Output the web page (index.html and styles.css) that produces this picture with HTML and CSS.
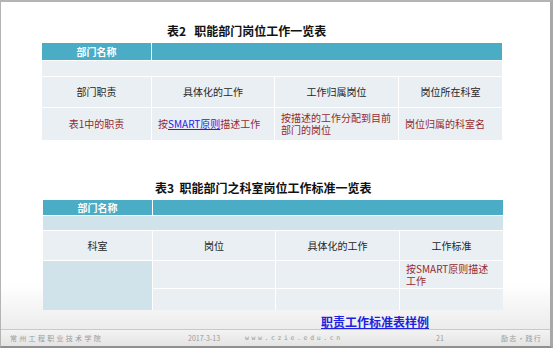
FILE: index.html
```html
<!DOCTYPE html>
<html lang="zh-CN">
<head>
<meta charset="utf-8">
<title>职能部门岗位工作一览表</title>
<link rel="stylesheet" href="styles.css">
</head>
<body>
<div class="frame">
  <div class="slide">
    <div class="title t1">表2&nbsp;&nbsp; 职能部门岗位工作一览表</div>
    <div class="tbl tbl1">
      <div class="cell head">部门名称</div>
      <div class="cell head span3"></div>
      <div class="cell light span4 r2"></div>
      <div class="cell light center">部门职责</div>
      <div class="cell light center">具体化的工作</div>
      <div class="cell light center">工作归属岗位</div>
      <div class="cell light center">岗位所在科室</div>
      <div class="cell light center red">表1中的职责</div>
      <div class="cell light red">按<a class="inlink" href="#">SMART原则</a>描述工作</div>
      <div class="cell light red">按描述的工作分配到目前部门的岗位</div>
      <div class="cell light red">岗位归属的科室名</div>
    </div>
    <div class="title t2">表3&nbsp; 职能部门之科室岗位工作标准一览表</div>
    <div class="tbl tbl2">
      <div class="cell head">部门名称</div>
      <div class="cell head span3"></div>
      <div class="cell dark span4"></div>
      <div class="cell light center">科室</div>
      <div class="cell light center">岗位</div>
      <div class="cell light center">具体化的工作</div>
      <div class="cell light center">工作标准</div>
      <div class="cell dark rowspan2"></div>
      <div class="cell light"></div>
      <div class="cell light"></div>
      <div class="cell light red narrow">按SMART原则描述工作</div>
      <div class="cell light"></div>
      <div class="cell light"></div>
      <div class="cell light"></div>
    </div>
    <a class="link" href="#">职责工作标准表样例</a>
  </div>
  <div class="footer">
    <span class="school">常州工程职业技术学院</span>
    <span class="date">2017-3-13</span>
    <span class="url">www.czie.edu.cn</span>
    <span class="page">21</span>
    <span class="motto">励志·践行</span>
  </div>
</div>
</body>
</html>
```
FILE: styles.css
```css
* { box-sizing: border-box; }
html, body { margin: 0; padding: 0; background: #fff; }
body {
  width: 553px;
  height: 348px;
  font-family: "Noto Sans CJK SC", "Noto Sans", sans-serif;
  overflow: hidden;
}
.frame {
  width: 553px;
  height: 348px;
  border-top: 2px solid #b4b4b4;
  border-left: 1px solid #b4b4b4;
  border-right: 3px solid #a8a8a8;
  border-bottom: 2px solid #8f8f8f;
  display: flex;
  flex-direction: column;
}
.slide {
  flex: 1;
  display: flex;
  flex-direction: column;
  align-items: flex-start;
  background: linear-gradient(to bottom, #fff 0, #fff 282px, #ececec 100%);
}
.title {
  font-size: 12px;
  font-weight: 700;
  line-height: 16px;
  color: #111;
  white-space: pre;
}
.t1 { margin-top: 21px; padding-left: 166px; }
.t2 { margin-top: 40px; padding-left: 154px; }
.tbl {
  display: grid;
  grid-template-columns: 109px 122px 123px 103px;
  gap: 1px;
  background: #fff;
  margin-top: 4px;
}
.tbl1 { margin-left: 41px; grid-template-rows: 17px 15px 30px 32px; }
.tbl2 { margin-left: 42px; grid-template-rows: 15px 14px 29px 27px 21px; }
.cell {
  display: flex;
  align-items: center;
  padding: 0 6px;
  font-size: 10px;
  line-height: 12px;
  color: #262626;
}
.head {
  background: #4bacc6;
  color: #fff;
  font-weight: 700;
  justify-content: center;
}
.light { background: #e9eff3; }
.dark { background: #d0e2ea; }
.center { justify-content: center; }
.span3 { grid-column: span 3; }
.span4 { grid-column: span 4; }
.rowspan2 { grid-row: span 2; }
.red { color: #962a2e; }
.narrow { padding-right: 10px; }
.inlink { color: #2424e6; text-decoration: underline; }
.link {
  margin-top: 4px;
  margin-left: 320px;
  font-size: 12px;
  font-weight: 700;
  line-height: 15px;
  color: #1f1fe0;
  text-decoration: underline;
}
.footer {
  height: 17px;
  border-top: 1px solid #c9c9c9;
  background: linear-gradient(to bottom, #f3f3f3, #e4e4e4);
  display: grid;
  grid-template-columns: 178px 57px 191px 65px 1fr;
  align-items: center;
  padding-left: 9px;
  font-size: 7px;
  line-height: 10px;
  color: #9a9a9a;
  white-space: nowrap;
}
.school { letter-spacing: 2.3px; }
.date { letter-spacing: 0; }
.url { letter-spacing: 2.6px; font-family: "DejaVu Sans Mono", monospace; font-size: 6.5px; }
.page { letter-spacing: 0; }
.motto { letter-spacing: 1.2px; }
```
